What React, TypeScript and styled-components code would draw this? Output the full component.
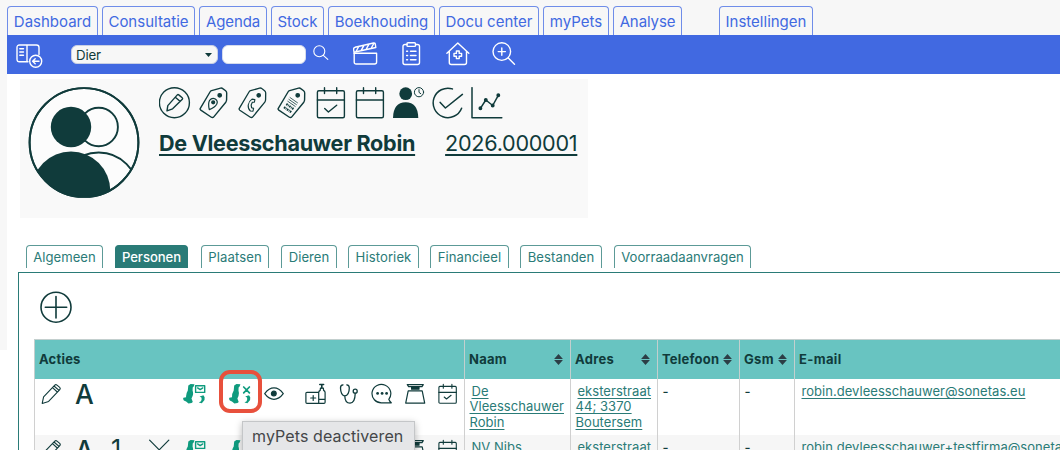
import React from 'react';
import styled, { createGlobalStyle } from 'styled-components';

const ink = '#103b3b';
const teal = '#2a7b77';
const blue = '#4169e1';

const GlobalStyle = createGlobalStyle`
  * { box-sizing: border-box; }
  body { margin: 0; background: #fff; font-family: Inter, "Liberation Sans", sans-serif; }
`;

const Page = styled.div`
  position: relative;
  width: 1060px;
  height: 450px;
  overflow: hidden;
  display: flex;
  flex-direction: column;
  background: #fff;
`;

const MainTabs = styled.nav`
  flex: none;
  height: 35px;
  padding: 6px 0 0 7px;
  display: flex;
  align-items: flex-end;
  background: #f7f7f7;
`;

const MainTab = styled.a<{ $w: number; $gap: number; $track?: number }>`
  width: ${p => p.$w}px;
  height: 29px;
  margin-left: ${p => p.$gap}px;
  display: flex;
  align-items: center;
  justify-content: center;
  border: 1px solid #6f8de9;
  border-bottom: 0;
  border-radius: 4px 4px 0 0;
  padding-top: 1px;
  color: ${blue};
  font-size: 15px;
  letter-spacing: ${p => p.$track ?? 0}px;
  white-space: nowrap;
`;

const Body = styled.div`
  display: flex;
  flex: 1;
  min-height: 0;
`;

const Gutter = styled.div`
  width: 7px;
  height: 315px;
  flex: none;
  background: #f7f7f7;
`;

const Main = styled.main`
  width: 1053px;
  flex: none;
  display: flex;
  flex-direction: column;
`;

const Toolbar = styled.div`
  flex: none;
  height: 39px;
  padding-left: 9px;
  display: flex;
  align-items: flex-start;
  background: ${blue};
  color: #fff;
`;

const Slot = styled.span<{ $l?: number; $t?: number }>`
  display: flex;
  flex: none;
  margin-left: ${p => p.$l ?? 0}px;
  margin-top: ${p => p.$t ?? 0}px;
`;

const KindSelect = styled.div`
  width: 147px;
  height: 19px;
  margin: 10px 0 0 28px;
  padding: 0 5px 0 4px;
  display: flex;
  align-items: center;
  justify-content: space-between;
  border: 1px solid #c9d0e4;
  border-radius: 6px;
  background: #f7f7f7;
  color: ${ink};
  font-size: 13.3px;
  letter-spacing: -0.15px;
`;

const SearchInput = styled.input`
  width: 84px;
  height: 19px;
  margin: 10px 0 0 4px;
  padding: 0 5px;
  border: 1px solid #d5dbec;
  border-radius: 6px;
  background: #fff;
`;

const Profile = styled.section`
  flex: none;
  width: 568px;
  height: 139px;
  margin: 5px 0 0 13px;
  padding: 7px 0 0 8px;
  display: flex;
  align-items: flex-start;
  background: #f9f9f9;
  color: ${ink};
`;

const ProfileInfo = styled.div`
  display: flex;
  flex-direction: column;
  margin-left: 19px;
  padding-top: 1px;
`;

const ProfileIcons = styled.div`
  display: flex;
  gap: 7px;
`;

const ProfileTitle = styled.div`
  display: flex;
  margin-top: 11px;
  gap: 30px;
  line-height: 26px;
  font-size: 21.6px;
  white-space: nowrap;
`;

const TitleLink = styled.a<{ $bold?: boolean }>`
  font-weight: ${p => (p.$bold ? 700 : 400)};
  letter-spacing: ${p => (p.$bold ? -0.29 : -0.27)}px;
  text-decoration: underline;
  text-decoration-thickness: 2px;
  text-underline-offset: 3px;
  text-decoration-skip-ink: none;
`;

const SubTabs = styled.nav`
  flex: none;
  height: 23px;
  margin: 27px 0 4px 19px;
  display: flex;
`;

const SubTab = styled.a<{ $w: number; $gap: number; $on?: boolean; $track: number }>`
  width: ${p => p.$w}px;
  height: 23px;
  margin-left: ${p => p.$gap}px;
  display: flex;
  align-items: center;
  justify-content: center;
  padding-bottom: 1px;
  border: 1px solid ${p => (p.$on ? teal : '#5c9a97')};
  border-bottom: 0;
  border-radius: 4px 4px 0 0;
  background: ${p => (p.$on ? teal : '#fff')};
  color: ${p => (p.$on ? '#fff' : teal)};
  font-size: 13.1px;
  font-weight: ${p => (p.$on ? 500 : 400)};
  letter-spacing: ${p => p.$track}px;
  white-space: nowrap;
`;

const Panel = styled.section`
  flex: 1;
  min-height: 0;
  margin-left: 11px;
  padding: 18px 0 0 15px;
  display: flex;
  flex-direction: column;
  border: solid ${teal};
  border-width: 1px 0 0 1px;
  color: ${ink};
`;

const AddButton = styled.button`
  align-self: flex-start;
  display: flex;
  margin: 0 0 15px 6px;
  padding: 0;
  border: 0;
  background: none;
  color: ${ink};
`;

const Row = styled.div<{ $head?: boolean; $alt?: boolean }>`
  flex: none;
  display: grid;
  grid-template-columns: 430px 106px 87px 82px 55px 280px;
  height: ${p => (p.$head ? 40 : 56)}px;
  border-top: ${p => (p.$head ? '1px solid #c3cfce' : '0')};
  background: ${p => (p.$head ? '#68c4c1' : p.$alt ? '#f6f6f6' : '#fff')};
`;

const HeadCell = styled.div<{ $track: number }>`
  display: flex;
  align-items: center;
  justify-content: space-between;
  padding: 0 7px 1px 4px;
  border-left: 1px solid #c3cfce;
  font-size: 13px;
  font-weight: 700;
  letter-spacing: ${p => p.$track}px;
`;

const Cell = styled.div<{ $lead?: number }>`
  padding: 5px 0 0 4.5px;
  border-left: 1px solid #d0d0d0;
  font-size: 13px;
  line-height: 15.4px;
  letter-spacing: 0.04px;
  color: ${teal};
  white-space: nowrap;
  text-indent: ${p => p.$lead ?? 0}px;
  a {
    text-decoration: underline;
    text-underline-offset: 1.5px;
    text-decoration-skip-ink: none;
  }
`;

const Dash = styled.span`
  color: ${ink};
  font-weight: 500;
`;

const Actions = styled.div`
  display: grid;
  grid-template-columns: 34px 34px 40px 34px 45px 36px 41px 33px 33px 33.5px 32.5px 22px;
  align-items: start;
  padding: 4px 0 0 6px;
  border-left: 1px solid #d0d0d0;
  svg { display: block; }
`;

const Letter = styled.span`
  font-size: 26.5px;
  line-height: 22px;
  font-weight: 500;
  letter-spacing: -0.5px;
`;

const Digit = styled(Letter)`
  padding-left: 2px;
  font-size: 25px;
  line-height: 21px;
  font-weight: 400;
`;

const Highlight = styled.div`
  position: absolute;
  left: 219px;
  top: 370px;
  width: 43px;
  height: 43px;
  border: 4px solid #e8503c;
  border-radius: 11px;
`;

const Tooltip = styled.div`
  position: absolute;
  left: 242px;
  top: 421px;
  width: 173px;
  height: 34px;
  padding: 4px 0 0 9px;
  border: 1px solid #c4c6c8;
  background: #e5e6e8;
  box-shadow: 0 2px 7px rgba(0, 0, 0, 0.28);
  color: #444648;
  font-size: 16px;
  line-height: 20px;
  letter-spacing: 0.11px;
  white-space: nowrap;
`;

type IconProps = { w: number; h: number; sw?: number; children: React.ReactNode };
const Icon = ({ w, h, sw = 1.3, children }: IconProps) => (
  <svg width={w} height={h} viewBox={`0 0 ${w} ${h}`} fill="none" stroke="currentColor" strokeWidth={sw} strokeLinecap="round" strokeLinejoin="round">
    {children}
  </svg>
);

const SidebarIcon = () => (
  <Icon w={27} h={26} sw={1.4}>
    <path d="M12 17.8H3.5Q1 17.8 1 15.3V3.5Q1 1 3.5 1H20.5Q23 1 23 3.5V10.5M11 1V17.8M3.8 4.8H7.5M3.8 8H7.5M3.8 11.2H7.5" />
    <circle cx="19.7" cy="17.3" r="6" />
    <path d="M23 17.3H16.7M19.2 14.8L16.6 17.3L19.2 19.8" />
  </Icon>
);
const SearchIcon = () => (
  <Icon w={16} h={16} sw={1.1}>
    <circle cx="6.3" cy="6.3" r="5.5" />
    <path d="M10.3 10.3L14.8 14.3" />
  </Icon>
);
const ClapperIcon = () => (
  <Icon w={25} h={24} sw={1.4}>
    <path d="M1.2 11.3H23.6V20Q23.6 22 21.6 22H3.2Q1.2 22 1.2 20Z" />
    <path d="M1.2 11.3L.6 7.5Q.4 5.8 2 5.3L20.5 1Q22 .7 22.3 2.2L22.8 5.5L2 10M5.8 4.5L3 9.5M11 3.4L8 8.6M16 2.2L13 7.5M21 1.2L18 6.5" />
  </Icon>
);
const ClipboardIcon = () => (
  <Icon w={19} h={24} sw={1.4}>
    <path d="M5 2.5H3Q1 2.5 1 4.5V20.5Q1 22.5 3 22.5H15.5Q17.5 22.5 17.5 20.5V4.5Q17.5 2.5 15.5 2.5H13.5" />
    <path d="M5 1.8Q5 .8 6 .8H12.5Q13.5 .8 13.5 1.8V3.4Q13.5 4.4 12.5 4.4H6Q5 4.4 5 3.4ZM4.6 9.2H5.6M8.5 9.2H14M4.6 13.5H5.6M8.5 13.5H14M4.6 17.8H5.6M8.5 17.8H14" />
  </Icon>
);
const HouseIcon = () => (
  <Icon w={24} h={24} sw={1.4}>
    <path d="M.9 11.2L11.8 1L22.8 11.2M3.3 9.5V20.5Q3.3 22.5 5.3 22.5H18.5Q20.5 22.5 20.5 20.5V9.5" />
    <path d="M10.4 9H13.2V11.4H15.6V14.2H13.2V16.6H10.4V14.2H8V11.4H10.4Z" />
  </Icon>
);
const ZoomIcon = () => (
  <Icon w={24} h={24} sw={1.4}>
    <circle cx="9.8" cy="9.6" r="8.8" />
    <path d="M16.3 16L22.5 22.3M9.8 6V13.2M6.2 9.6H13.4" />
  </Icon>
);

const Avatar = () => (
  <svg width="112" height="112" viewBox="0 0 112 112" fill="none" stroke="currentColor" strokeWidth="1.9">
    <defs>
      <clipPath id="round"><circle cx="56" cy="56.5" r="54.5" /></clipPath>
    </defs>
    <circle cx="56" cy="56.5" r="54.4" fill="#fcfcfc" />
    <g clipPath="url(#round)">
      <circle cx="70.7" cy="41" r="19.2" />
      <circle cx="70.7" cy="106" r="39.5" />
      <circle cx="43" cy="104.8" r="39.3" fill="currentColor" stroke="none" />
    </g>
    <circle cx="43" cy="41" r="20.2" fill="currentColor" stroke="none" />
    <circle cx="56" cy="56.5" r="54.4" />
  </svg>
);

const TagShape = () => (
  <>
    <path d="M2.3 21.4L12 5Q12.6 4 13.6 3.7L22.6 1.1Q23.8 .8 24.8 1.6L27.6 3.7Q28.7 4.6 28.7 6L28.6 12.6Q28.6 14 27.8 15.2L16 29.6Q14.7 31.2 13 30L2.8 23.2Q1.7 22.4 2.3 21.4Z" />
    <circle cx="21.7" cy="8.3" r="1.7" fill="currentColor" />
  </>
);

const PencilCircle = () => (
  <Icon w={32} h={32} sw={1.4}>
    <circle cx="15.4" cy="15.7" r="15" />
    <path d="M8 23.9L8.8 18.6L18.3 7.9Q19 7.2 19.8 7.9L23.2 10.7Q24 11.4 23.3 12.3L13.6 21.8ZM16.3 10.3L21 14.3" />
  </Icon>
);
const TagPin = () => (
  <Icon w={32} h={32} sw={1.4}>
    <TagShape />
    <path strokeWidth="1.2" d="M11.3 22.6Q9.8 16.5 11.6 13.3Q14 10.4 17.3 12Q20.3 14 18.7 17.3Q16.7 20.6 11.3 22.6Z" />
    <circle cx="15.2" cy="15.3" r="1.4" fill="currentColor" />
  </Icon>
);
const TagPhone = () => (
  <Icon w={32} h={32} sw={1.3}>
    <TagShape />
    <path strokeWidth="1.1" d="M15 12.1L17.9 12.6L17.4 15.2L15.4 15.2Q13.5 17.7 14.6 20.8L16.6 21.4L16 24.2L13.4 24Q10.9 21.8 11.2 18Q11.9 14 15 12.1Z" />
  </Icon>
);
const TagBarcode = () => (
  <Icon w={32} h={32} sw={1.4}>
    <TagShape />
    <path strokeWidth="0.8" d="M14 10.5L21.5 15.8M12.9 12.4L20.4 17.6M11.8 14.3L19.2 19.4" />
    <path strokeWidth="2.2" strokeDasharray="1.6 .6 .8 .6" strokeLinecap="butt" d="M10.3 17L17.5 22M8 20.2L15.3 25.2" />
  </Icon>
);
const Calendar = ({ check }: { check?: boolean }) => (
  <Icon w={32} h={32} sw={1.4}>
    <rect x="2.4" y="3.7" width="27" height="27" rx="1.5" />
    <path d="M2.4 13H29.4M9.5 .8V6.6M21.7 .8V6.6" />
    {check && <path d="M9.7 21.4L13.4 25L21.7 18.2" />}
  </Icon>
);
const PersonClock = () => (
  <Icon w={32} h={32} sw={1}>
    <circle cx="12.7" cy="6.7" r="6.4" fill="currentColor" stroke="none" />
    <path d="M0 31Q.3 15.3 12.7 15.3Q25 15.3 25.3 31Z" fill="currentColor" stroke="none" />
    <circle cx="26" cy="5.2" r="4.6" />
    <path d="M26 2.6V5.4L27.8 6.7" />
  </Icon>
);
const CheckCircle = () => (
  <Icon w={32} h={32} sw={1.5}>
    <path d="M20.4 1.9A14.7 14.7 0 1 0 29.6 21.2M8.2 15.4L13.4 21L30.4 7.4" />
  </Icon>
);
const ChartIcon = () => (
  <Icon w={33} h={32} sw={1.5}>
    <path d="M1 .7V30.7H30.8M9.4 21.3L14.8 13L21.7 18.5L27.3 8.3" />
    {[[9.4, 21.3], [14.8, 13], [21.7, 18.5], [27.3, 8.3]].map(([x, y]) => (
      <circle key={x} cx={x} cy={y} r="1.2" fill="currentColor" />
    ))}
  </Icon>
);
const PlusCircle = () => (
  <Icon w={33} h={33} sw={1.6}>
    <circle cx="16" cy="16.2" r="15" />
    <path d="M16 5.6V27M5.3 16.2H26.7" />
  </Icon>
);

const Sort = () => (
  <svg width="9" height="11" viewBox="0 0 9 11" fill="#2c3e46">
    <path d="M4.5 0L8.9 4.9H.1ZM4.5 11L.1 6.1H8.9Z" />
  </svg>
);

const Pencil = () => (
  <Icon w={22} h={22} sw={1.1}>
    <path d="M1.2 20.4L2.6 13.8L13.8 2.2Q14.8 1.2 16 2.1L18.7 4.4Q19.8 5.5 18.8 6.6L7.6 18.4ZM11.5 4.6L16.3 9M13 3L18 7.4" />
  </Icon>
);
const PetShape = () => (
  <path d="M5.3 2.4L7.6 1L11.5 1.3L10.7 3.6L9.7 4.6L9.6 7.8Q10.6 10.4 9.6 13L8.5 15.5L9.8 18.9L8.6 20.1L5.5 20.4Q3 18 .9 17.4Q-.3 16.2 .4 14.8L3.1 14.3Q2.8 10.6 4.8 7.4Z" fill="#0f9b7e" stroke="none" />
);
const CatShape = () => (
  <path d="M17.2 13.6L21 12.2Q22.9 13.7 22.1 17L19.4 20.3L16.4 19.4L18.6 18.2Q19.7 16.2 19 14.4Z" fill="#0f9b7e" stroke="none" />
);
const PetsMail = () => (
  <Icon w={24} h={22} sw={1.4}>
    <PetShape />
    <path d="M12.6 2.8H21.7V9.4H12.6ZM14.6 4.9L17.2 6.6L19.8 4.9" stroke="#0f9b7e" />
    <g transform="translate(-.6 0)"><CatShape /></g>
  </Icon>
);
const PetsCross = () => (
  <Icon w={24} h={22} sw={1.7}>
    <g transform="translate(.9 0)"><PetShape /></g>
    <path d="M15.7 4L21.4 9.9M21.4 4L15.7 9.9" stroke="#0f9b7e" />
    <CatShape />
  </Icon>
);
const Eye = () => (
  <Icon w={20} h={22} sw={1.2}>
    <path d="M.7 10.6Q5 4.9 10 4.9Q15 4.9 19.3 10.6Q15 16.3 10 16.3Q5 16.3 .7 10.6Z" />
    <circle cx="9.8" cy="10.6" r="2.4" fill="currentColor" />
  </Icon>
);
const Medicine = () => (
  <Icon w={22} h={22} sw={1.2}>
    <path d="M13.3 9.3H2Q.9 9.3 .9 10.4V19.2Q.9 20.3 2 20.3H19Q20.1 20.3 20.1 19.2V9.6Q20.1 8 18.6 7.4L18.4 5.2H15.4L15.2 7.4Q13.7 8 13.7 9.6V20M8.2 12.5V17.5M5.7 15H10.7M13.8 16.4H20" />
    <path d="M14.8 1.5H18.6M16.8 1.5V5" strokeWidth="1.6" />
  </Icon>
);
const Stethoscope = () => (
  <Icon w={22} h={22} sw={1.3}>
    <path d="M5 1.8Q2.4 2 2.5 5Q2.7 12.3 6.8 13Q11.2 12.3 11.3 5Q11.3 2 8.8 1.8M6.8 13Q7 20.2 12 20.2Q17 20 17.2 10.5" />
    <circle cx="17.2" cy="8.2" r="2" />
  </Icon>
);
const Chat = () => (
  <Icon w={22} h={22} sw={1.2}>
    <path d="M17.8 16.3A9.4 9.2 0 1 0 11 19.8H20.3Q18.6 18.6 17.8 16.3" />
    <g fill="currentColor" stroke="none">
      <circle cx="6.6" cy="10.4" r="1.4" />
      <circle cx="11.1" cy="10.4" r="1.4" />
      <circle cx="15.6" cy="10.4" r="1.4" />
    </g>
  </Icon>
);
const Scale = () => (
  <Icon w={22} h={22} sw={1.2}>
    <path d="M2.3 1.6H18.3L17 3.6H3.6Z" />
    <path d="M6.6 3.7H14V6.2H6.6Z" fill="currentColor" />
    <path d="M3.2 7.8H17.2L19.7 20.1H.7Z" />
  </Icon>
);
const SmallCalendar = () => (
  <Icon w={22} h={22} sw={1.1}>
    <rect x="1.9" y="3.4" width="17.4" height="16.8" rx="1" />
    <path d="M1.9 9.4H19.3M6.3 1.3V5.2M14.9 1.3V5.2M7.2 14L9.5 16L14.1 12.3" />
  </Icon>
);
const Fork = () => (
  <Icon w={22} h={22} sw={1.2}>
    <path d="M.6 1.2L10.2 10.8L19.8 1.2M10.2 10.8V20" />
  </Icon>
);

const mainTabs: [string, number, number, number?][] = [
  ['Dashboard', 91, 0], ['Consultatie', 93, 4], ['Agenda', 68, 4, -0.12], ['Stock', 53, 4], ['Boekhouding', 107, 4],
  ['Docu center', 100, 4], ['myPets', 66, 4], ['Analyse', 69, 4, -0.1], ['Instellingen', 94, 37],
];

const subTabs: [string, number, number, number][] = [
  ['Algemeen', 77, 0, 0.03], ['Personen', 73, 12, -0.05], ['Plaatsen', 68, 13, 0.1], ['Dieren', 56, 12, 0.03], ['Historiek', 71, 11, 0.1],
  ['Financieel', 79, 11, 0.06], ['Bestanden', 82, 11, 0.08], ['Voorraadaanvragen', 137, 12, 0.03],
];

const columns: [string, boolean, number][] = [
  ['Acties', false, 0.2], ['Naam', true, 0.28], ['Adres', true, 0.3], ['Telefoon', true, 0.2], ['Gsm', true, 0.3], ['E-mail', false, 0.35],
];

const rows = [
  { name: ['De', 'Vleesschauwer', 'Robin'], mail: 'robin.devleesschauwer@sonetas.eu', extra: false },
  { name: ['NV Nibs'], mail: 'robin.devleesschauwer+testfirma@sonetas.eu', extra: true },
];

const Lines = ({ items }: { items: string[] }) => (
  <a>
    {items.map((t, i) => (
      <React.Fragment key={t}>{i > 0 && <br />}{t}</React.Fragment>
    ))}
  </a>
);

export default function App() {
  return (
    <Page>
      <GlobalStyle />
      <MainTabs>
        {mainTabs.map(([label, w, gap, track]) => (
          <MainTab key={label} $w={w} $gap={gap} $track={track}>{label}</MainTab>
        ))}
      </MainTabs>
      <Body>
        <Gutter />
        <Main>
          <Toolbar>
            <Slot $t={9}><SidebarIcon /></Slot>
            <KindSelect>
              Dier
              <svg width="7" height="4" viewBox="0 0 7 4" fill={ink}><path d="M0 0H7L3.5 4Z" /></svg>
            </KindSelect>
            <SearchInput />
            <Slot $l={7} $t={10}><SearchIcon /></Slot>
            <Slot $l={24} $t={7}><ClapperIcon /></Slot>
            <Slot $l={24} $t={7}><ClipboardIcon /></Slot>
            <Slot $l={25} $t={7}><HouseIcon /></Slot>
            <Slot $l={22} $t={7}><ZoomIcon /></Slot>
          </Toolbar>
          <Profile>
            <Avatar />
            <ProfileInfo>
              <ProfileIcons>
                <PencilCircle />
                <TagPin />
                <TagPhone />
                <TagBarcode />
                <Calendar check />
                <Calendar />
                <PersonClock />
                <CheckCircle />
                <ChartIcon />
              </ProfileIcons>
              <ProfileTitle>
                <TitleLink $bold>De Vleesschauwer Robin</TitleLink>
                <TitleLink>2026.000001</TitleLink>
              </ProfileTitle>
            </ProfileInfo>
          </Profile>
          <SubTabs>
            {subTabs.map(([label, w, gap, track]) => (
              <SubTab key={label} $w={w} $gap={gap} $track={track} $on={label === 'Personen'}>{label}</SubTab>
            ))}
          </SubTabs>
          <Panel>
            <AddButton><PlusCircle /></AddButton>
            <Row $head>
              {columns.map(([label, sortable, track]) => (
                <HeadCell key={label} $track={track}>{label}{sortable && <Sort />}</HeadCell>
              ))}
            </Row>
            {rows.map(r => (
              <Row key={r.mail} $alt={r.extra}>
                <Actions>
                  <Pencil />
                  <Letter>A</Letter>
                  {r.extra ? <Digit>1</Digit> : <span />}
                  {r.extra ? <Fork /> : <span />}
                  <PetsMail />
                  <PetsCross />
                  <Eye />
                  <Medicine />
                  <Stethoscope />
                  <Chat />
                  <Scale />
                  <SmallCalendar />
                </Actions>
                <Cell $lead={2}><Lines items={r.name} /></Cell>
                <Cell $lead={2}><Lines items={['eksterstraat', '44; 3370', 'Boutersem']} /></Cell>
                <Cell><Dash>-</Dash></Cell>
                <Cell><Dash>-</Dash></Cell>
                <Cell $lead={2}><Lines items={[r.mail]} /></Cell>
              </Row>
            ))}
          </Panel>
        </Main>
      </Body>
      <Highlight />
      <Tooltip>myPets deactiveren</Tooltip>
    </Page>
  );
}
